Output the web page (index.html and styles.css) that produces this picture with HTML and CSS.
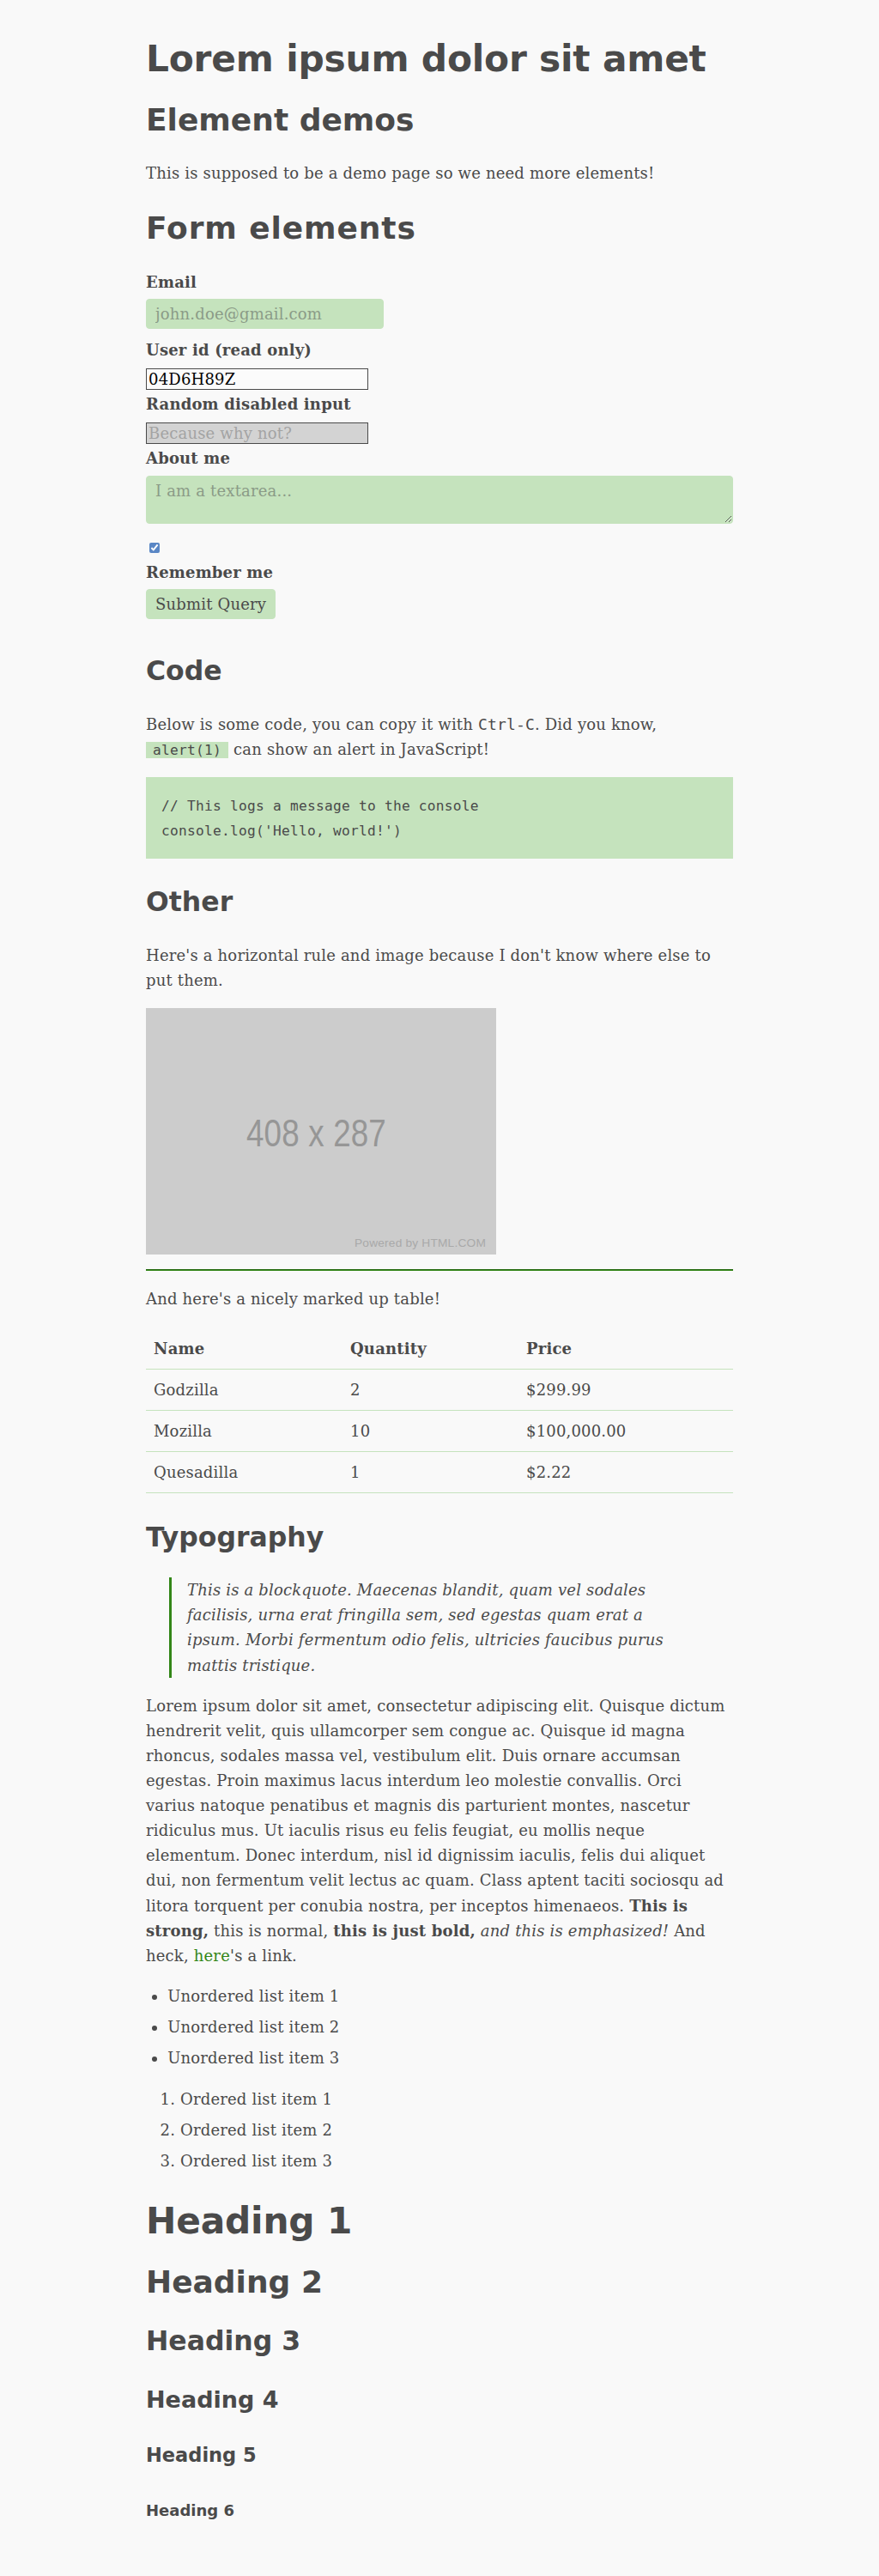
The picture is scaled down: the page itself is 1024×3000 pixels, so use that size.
FILE: index.html
```html
<!DOCTYPE html>
<html lang="en">
<head>
<meta charset="utf-8">
<title>Element demos</title>
<link rel="stylesheet" href="styles.css">
</head>
<body class="page">
<h1 class="h h1">Lorem ipsum dolor sit amet</h1>
<h2 class="h h2">Element demos</h2>
<p class="p">This is supposed to be a demo page so we need more elements!</p>
<h2 class="h h2 h2-wide">Form elements</h2>
<form class="form">
<label class="label" for="email">Email</label>
<input class="field field-text" type="email" id="email" placeholder="john.doe@gmail.com">
<label class="label" for="uid">User id (read only)</label>
<input class="plain" id="uid" value="04D6H89Z" readonly>
<label class="label" for="dis">Random disabled input</label>
<input class="plain plain-disabled" id="dis" placeholder="Because why not?" disabled>
<label class="label" for="about">About me</label>
<textarea class="field area" id="about" placeholder="I am a textarea..."></textarea>
<input class="check" type="checkbox" id="rem" checked>
<label class="label" for="rem">Remember me</label>
<input class="field submit" type="submit" value="Submit Query">
</form>
<h3 class="h h3 h3-section">Code</h3>
<p class="p">Below is some code, you can copy it with <kbd class="kbd">Ctrl-C</kbd>. Did you know, <code class="code">alert(1)</code> can show an alert in JavaScript!</p>
<pre class="pre"><code class="pre-code">// This logs a message to the console
console.log('Hello, world!')</code></pre>
<h3 class="h h3 h3-section">Other</h3>
<p class="p">Here's a horizontal rule and image because I don't know where else to put them.</p>
<svg class="img" width="408" height="287" viewBox="0 0 408 287" role="img" aria-label="408 x 287"><rect width="408" height="287" fill="#cccccc"/><text x="117" y="161" font-family="Liberation Sans, Arial, sans-serif" font-size="44" fill="#969696" textLength="163" lengthAdjust="spacingAndGlyphs">408 x 287</text><text x="243" y="277.5" font-family="Liberation Sans, Arial, sans-serif" font-size="13" fill="#a9a9a9" textLength="153" lengthAdjust="spacingAndGlyphs">Powered by HTML.COM</text></svg>
<hr class="hr">
<p class="p">And here's a nicely marked up table!</p>
<table class="table">
<colgroup><col class="col-name"><col class="col-qty"><col class="col-price"></colgroup>
<thead>
<tr><th class="cell th">Name</th><th class="cell th">Quantity</th><th class="cell th">Price</th></tr>
</thead>
<tbody>
<tr><td class="cell">Godzilla</td><td class="cell">2</td><td class="cell">$299.99</td></tr>
<tr><td class="cell">Mozilla</td><td class="cell">10</td><td class="cell">$100,000.00</td></tr>
<tr><td class="cell">Quesadilla</td><td class="cell">1</td><td class="cell">$2.22</td></tr>
</tbody>
</table>
<h3 class="h h3 h3-section">Typography</h3>
<blockquote class="quote"><p class="quote-p">This is a blockquote. Maecenas blandit, quam vel sodales facilisis, urna erat fringilla sem, sed egestas quam erat a ipsum. Morbi fermentum odio felis, ultricies faucibus purus mattis tristique.</p></blockquote>
<p class="p">Lorem ipsum dolor sit amet, consectetur adipiscing elit. Quisque dictum hendrerit velit, quis ullamcorper sem congue ac. Quisque id magna rhoncus, sodales massa vel, vestibulum elit. Duis ornare accumsan egestas. Proin maximus lacus interdum leo molestie convallis. Orci varius natoque penatibus et magnis dis parturient montes, nascetur ridiculus mus. Ut iaculis risus eu felis feugiat, eu mollis neque elementum. Donec interdum, nisl id dignissim iaculis, felis dui aliquet dui, non fermentum velit lectus ac quam. Class aptent taciti sociosqu ad litora torquent per conubia nostra, per inceptos himenaeos. <strong class="strong">This is strong,</strong> this is normal, <b class="strong">this is just bold,</b> <em class="em">and this is emphasized!</em> And heck, <a class="link" href="#">here</a>'s a link.</p>
<ul class="ul">
<li class="li">Unordered list item 1</li>
<li class="li">Unordered list item 2</li>
<li class="li">Unordered list item 3</li>
</ul>
<ol class="ol">
<li class="li">Ordered list item 1</li>
<li class="li">Ordered list item 2</li>
<li class="li">Ordered list item 3</li>
</ol>
<h1 class="h h1">Heading 1</h1>
<h2 class="h h2">Heading 2</h2>
<h3 class="h h3">Heading 3</h3>
<h4 class="h h4">Heading 4</h4>
<h5 class="h h5">Heading 5</h5>
<h6 class="h h6">Heading 6</h6>
</body>
</html>
```
FILE: styles.css
```css
.page {
  margin: 0 auto;
  max-width: 684px;
  padding: 13px;
  font-family: "DejaVu Serif", serif;
  font-size: 18px;
  line-height: 1.618;
  letter-spacing: 0.18px;
  color: #4a4a4a;
  background: #f9f9f9;
}

.h {
  font-family: "DejaVu Sans", Verdana, sans-serif;
  font-weight: 700;
  line-height: 1.1;
  letter-spacing: 0;
  color: #4a4a4a;
}
.h1 { font-size: 42.3px; line-height: 1.03; margin: 33.5px 0 28.3px; letter-spacing: -0.2px; }
.h2 { font-size: 36px; margin: 29.9px 0 27.9px; }
.h2-wide { letter-spacing: 0.9px; }
.h3 { font-size: 31.5px; margin: 31.5px 0 30px; }
.h3-section { margin-top: 33.5px; }
.h4 { font-size: 27px; margin: 35.9px 0; }
.h5 { font-size: 22.5px; margin: 37.6px 0; }
.h6 { font-size: 18px; margin: 41.9px 0; }

.p { margin: 18px 0; }

.form { margin: 0; }

.label {
  display: block;
  margin-bottom: 5px;
  font-weight: 700;
}

.field {
  font-family: "DejaVu Serif", serif;
  font-size: 18px;
  line-height: normal;
  letter-spacing: 0.18px;
  color: #4a4a4a;
  padding: 6px 10px;
  margin: 0 0 10px;
  background: #c5e3bd;
  border: 1px solid #c5e3bd;
  border-radius: 4px;
  box-sizing: border-box;
  box-shadow: none;
  outline: none;
}
.field-text { width: 277px; }
.field::placeholder { color: #8b9b87; opacity: 1; }

.plain {
  font-family: "DejaVu Serif", serif;
  font-size: 18px;
  line-height: normal;
  letter-spacing: 0.18px;
  color: #000;
  background: #fbfbfb;
  border: 1px solid #4a4a4a;
  border-radius: 0;
  padding: 1px 2px;
  margin: 0;
  width: 259px;
  box-sizing: border-box;
}
.plain-disabled { background: #d3d3d3; }
.plain-disabled::placeholder { color: #a3a3a3; opacity: 1; }

.area {
  display: block;
  width: 100%;
}

.check {
  display: block;
  width: 12px;
  height: 12px;
  margin: 22px 0 8px 4px;
  accent-color: #5a87c5;
}

.submit {
  cursor: pointer;
  display: inline-block;
}

.kbd {
  font-family: "DejaVu Sans Mono", monospace;
  font-size: 18px;
  letter-spacing: 0.16px;
}
.code {
  font-family: "DejaVu Sans Mono", monospace;
  font-size: 16.2px;
  letter-spacing: 0.25px;
  padding: 0 8.1px;
  background: #c5e3bd;
}

.pre {
  font-family: "DejaVu Sans Mono", monospace;
  font-size: 18px;
  line-height: 1.618;
  background: #c5e3bd;
  padding: 18px;
  margin: 18px 0;
  white-space: pre;
  overflow-x: auto;
}
.pre-code {
  font-family: "DejaVu Sans Mono", monospace;
  font-size: 16.2px;
  letter-spacing: 0.25px;
}

.img { vertical-align: baseline; }

.hr {
  height: 0;
  margin: 9px 0;
  border: 0;
  border-top: 1px solid #2b6d17;
  border-bottom: 1px solid #338618;
}

.table {
  width: 100%;
  table-layout: fixed;
  border-collapse: collapse;
  margin: 19.5px 0 0;
}
.col-name { width: 229px; }
.col-qty { width: 205px; }
.col-price { width: 250px; }
.cell {
  padding: 9px;
  text-align: left;
  border-bottom: 1px solid #c5e3bd;
  vertical-align: middle;
}
.th { font-weight: 700; }

.quote {
  margin: 18px 40px 18px 27px;
  padding: 0 0 0 18px;
  border-left: 3px solid #338618;
  font-style: italic;
}
.quote-p { margin: 0; }

.strong { font-weight: 700; }
.em { font-style: italic; }
.link { color: #338618; text-decoration: none; }

.ul { margin: 18px 0; padding-left: 25.2px; }
.ol { margin: 18px 0; padding-left: 40px; }
.li { margin-bottom: 7.2px; }
```
